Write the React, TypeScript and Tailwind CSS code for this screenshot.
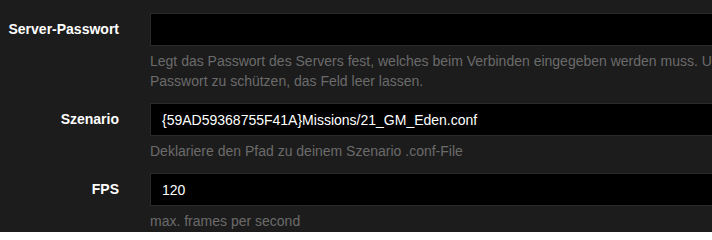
import React from "react";

type Field = {
  label: string;
  value: string;
  help: React.ReactNode;
};

const FIELDS: Field[] = [
  {
    label: "Server-Passwort",
    value: "",
    help: (
      <>
        Legt das Passwort des Servers fest, welches beim Verbinden eingegeben werden muss. Um den Server nicht mit einem
        <br />
        Passwort zu schützen, das Feld leer lassen.
      </>
    ),
  },
  {
    label: "Szenario",
    value: "{59AD59368755F41A}Missions/21_GM_Eden.conf",
    help: "Deklariere den Pfad zu deinem Szenario .conf-File",
  },
  {
    label: "FPS",
    value: "120",
    help: "max. frames per second",
  },
];

function FormRow({ label, value, help }: Field) {
  return (
    <div className="flex mb-[12px]">
      <div className="w-[119px] shrink-0 h-[33px] flex items-center justify-end text-[14px] font-bold text-white">
        {label}
      </div>
      <div className="ml-[31px] w-[1000px] shrink-0">
        <input
          readOnly
          value={value}
          className="block w-full h-[33px] bg-black border border-[#2a2a2a] pl-[11px] text-[14px] text-white outline-none"
        />
        <p className="mt-[5px] text-[14px] leading-[20px] text-[#6b6b6b]">{help}</p>
      </div>
    </div>
  );
}

export default function App() {
  return (
    <div
      className="w-[712px] h-[232px] overflow-hidden bg-[#1c1c1c] pt-[13px]"
      style={{ fontFamily: '"Liberation Sans", Arial, sans-serif' }}
    >
      {FIELDS.map((f) => (
        <FormRow key={f.label} {...f} />
      ))}
    </div>
  );
}
